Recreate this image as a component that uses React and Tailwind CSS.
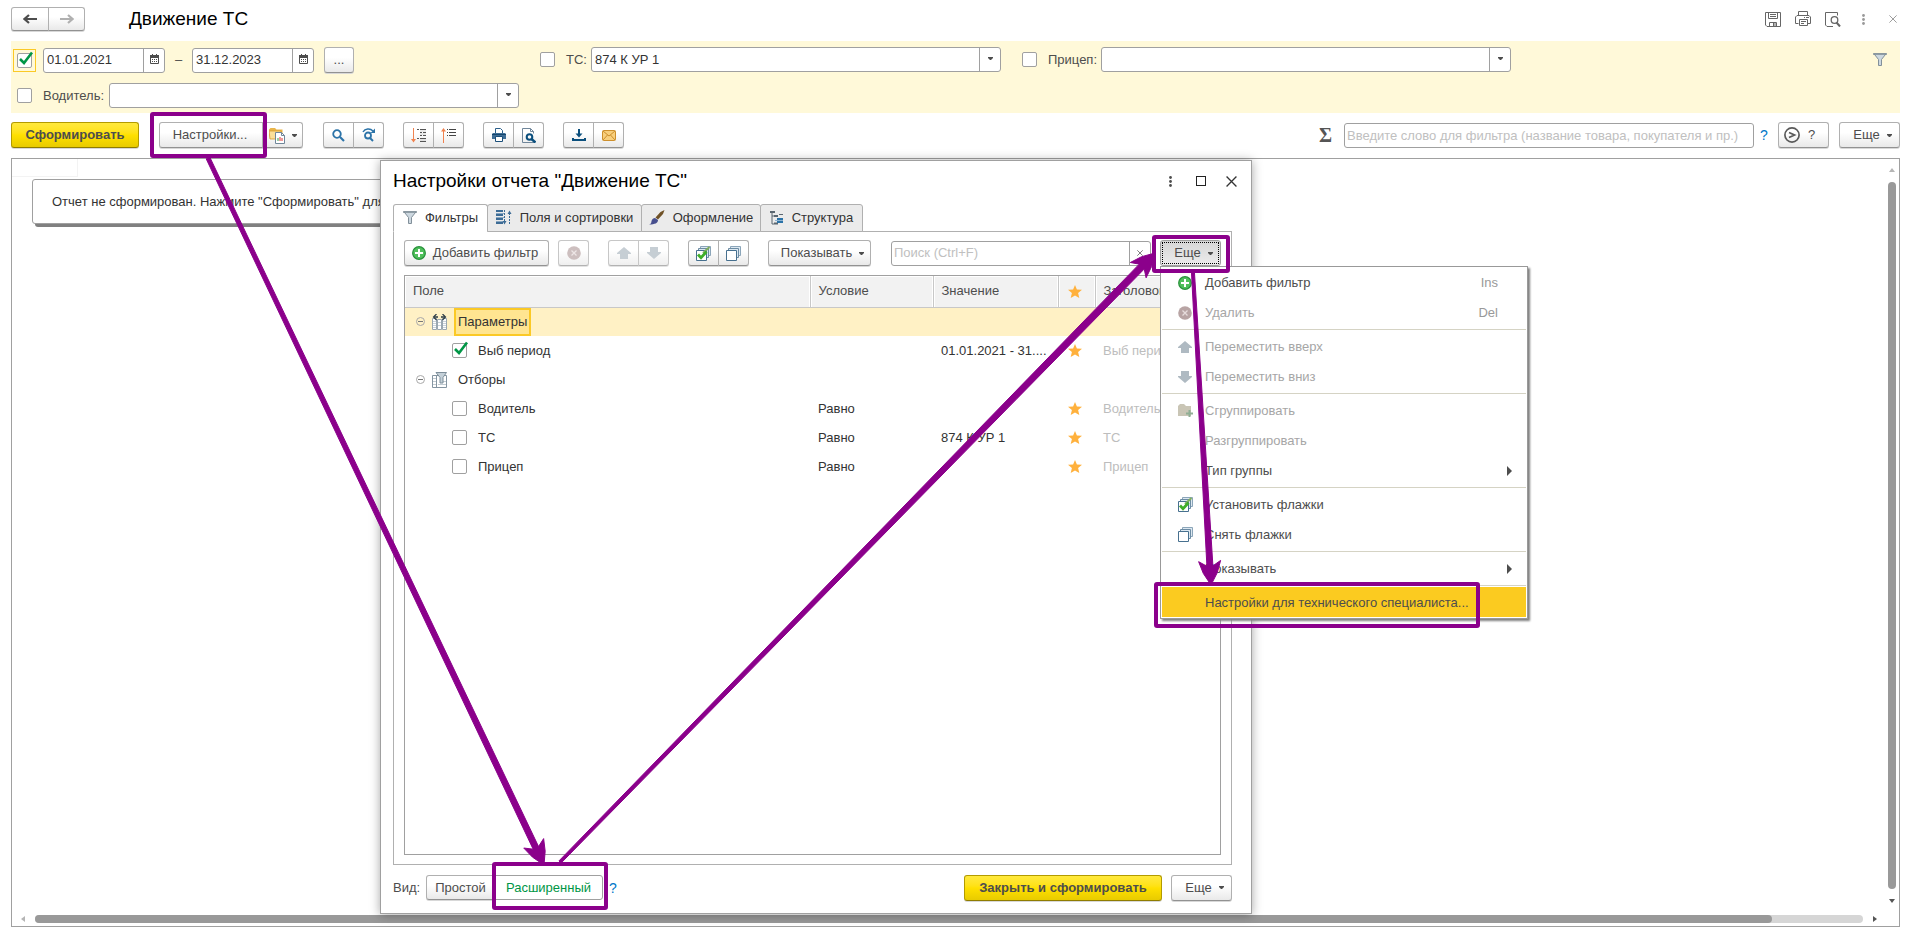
import { useState } from 'react';

const font = "font-['Liberation_Sans',Arial,sans-serif]";
const btn =
  'flex items-center justify-center border border-[#b0b0b0] border-b-[#929292] bg-linear-to-b from-white from-40% to-[#e9e9e9] text-[#4d4d4d] shadow-[0_1px_0_#d8d8d8]';
const primary =
  'flex items-center justify-center rounded-[3px] border border-[#b39b00] border-b-[#8f7c00] bg-linear-to-b from-[#ffe93c] via-[#ffe000] to-[#e8cb00] font-bold text-[#4d4d4d] shadow-[0_1px_0_#d8d8d8]';

/* ---------- icons ---------- */

function Svg({ w = 16, h = 16, children, className = '' }) {
  return (
    <svg
      width={w}
      height={h}
      viewBox={`0 0 ${w} ${h}`}
      fill="none"
      className={`shrink-0 ${className}`}
      aria-hidden="true"
    >
      {children}
    </svg>
  );
}

const Caret = () => (
  <Svg w={5} h={3}>
    <path d="M0 0h5v1L3 3H2L0 1z" fill="#4d4d4d" />
  </Svg>
);

const NavArrow = ({ color, flip }) => (
  <Svg w={14} h={10}>
    <path
      d={flip ? 'M0 5h11M8 1l4.500 4L8 9' : 'M14 5H3M6 1L1.500 5L6 9'}
      stroke={color}
      strokeWidth="2.200"
    />
  </Svg>
);

const CalendarIcon = () => (
  <Svg w={9} h={10}>
    <path d="M.5 2.500h8v7h-8z" stroke="#4d4d4d" />
    <path d="M0 1h9v3H0zM2 0h1v2H2zM6 0h1v2H6z" fill="#4d4d4d" />
    <path d="M2 5.500h6M2 7.500h6" stroke="#4d4d4d" strokeDasharray="1 1" />
  </Svg>
);

const FunnelIcon = () => (
  <Svg w={14} h={13}>
    <path d="M1 .8h12L8.500 6.500v6h-3v-6z" fill="#cdd8e0" stroke="#82909a" />
    <path d="M0 1h14" stroke="#82909a" strokeWidth="1.500" />
  </Svg>
);

const FolderReportIcon = () => (
  <Svg w={16} h={17}>
    <path d="M0 2.500L1.500 1H6l1.500 1.500h6V12H1z" fill="#e9b54a" />
    <path d="M0 4h12v8H1z" fill="#fbdf9a" stroke="#d69b2d" strokeWidth=".8" />
    <path d="M6.500 5.500h6l3 3v8h-9z" fill="#fff" stroke="#70869a" />
    <path d="M12.500 5.500v3h3" stroke="#70869a" />
    <path d="M9 14v-3" stroke="#2f9e44" />
    <path d="M11 14v-4" stroke="#e03131" />
    <path d="M13 14v-3" stroke="#e03131" />
  </Svg>
);

const SearchIcon = () => (
  <Svg w={13} h={13}>
    <circle cx="5" cy="5" r="3.800" stroke="#2b73a8" strokeWidth="1.800" />
    <path d="M8 8l4 4" stroke="#2b73a8" strokeWidth="2.200" />
  </Svg>
);

const SearchNextIcon = () => (
  <Svg w={14} h={14}>
    <circle cx="6" cy="7.500" r="3" stroke="#2b73a8" strokeWidth="1.800" />
    <path d="M8 10l3 3" stroke="#2b73a8" strokeWidth="2" />
    <path d="M1 4C3 .5 8 0 11 3" stroke="#2b73a8" strokeWidth="1.500" />
    <path d="M13 .5v4.500H8.500z" fill="#2b73a8" />
  </Svg>
);

const ExpandIcon = () => (
  <Svg w={15} h={15}>
    <path d="M2.500 0v12" stroke="#f0824f" />
    <path d="M0 11h5l-2.500 3.500z" fill="#f0824f" />
    <path d="M6 1.500h2M9 1.500h6M9 4.500h2M12 4.500h3M9 7.500h2M12 7.500h3M6 10.500h2M9 10.500h6M9 13.500h6" stroke="#555" />
    <path d="M9 3h6M9 6h6M9 12h6" stroke="#bbb" strokeWidth=".6" />
  </Svg>
);

const CollapseIcon = () => (
  <Svg w={15} h={15}>
    <path d="M2.500 2v13" stroke="#f0824f" />
    <path d="M0 3.500h5L2.500 0z" fill="#f0824f" />
    <path d="M6 1.500h1M8 1.500h7M6 4.500h1M8 4.500h7M6 7.500h1M8 7.500h7" stroke="#444" />
  </Svg>
);

const PrintIcon = () => (
  <Svg w={14} h={14}>
    <path d="M3.500 5V.5h5l2 2V5" stroke="#2b5f8a" fill="#fff" />
    <path d="M1 5h12l1 1v5h-3V9H3v2H0V6z" fill="#3f6f97" />
    <path d="M3.500 8.500h7v5h-7z" fill="#fff" stroke="#1c4f7a" />
    <path d="M0 6.500h14" stroke="#16476f" />
  </Svg>
);

const PreviewIcon = () => (
  <Svg w={14} h={15}>
    <path d="M12.500 14.500H.5V.5h8l3 3v2M8.500.5v3h3" stroke="#70869a" />
    <circle cx="7.500" cy="9" r="2.800" stroke="#0b4f7d" strokeWidth="2" />
    <path d="M9.500 11l4 3.500" stroke="#0b4f7d" strokeWidth="2.500" />
  </Svg>
);

const DownloadIcon = () => (
  <Svg w={14} h={12}>
    <path d="M7 0v6" stroke="#0b4f7d" strokeWidth="2" />
    <path d="M3.500 4.500h7L7 8.500z" fill="#0b4f7d" />
    <path d="M1 9v2h12V9" stroke="#0b4f7d" strokeWidth="2" />
  </Svg>
);

const MailIcon = () => (
  <Svg w={14} h={11}>
    <rect x=".5" y=".5" width="13" height="10" rx="1" fill="#f8cf7d" stroke="#cd8f2c" />
    <path d="M1 1l6 5 6-5M1 10l4.500-5M13 10L8.500 5" stroke="#cd8f2c" />
  </Svg>
);

const SaveIcon = () => (
  <Svg w={16} h={15}>
    <path d="M.5.5h15v14H2L.5 13z" stroke="#666" />
    <path d="M3.500.5v6h9v-6M5 2.500h6M5 4.500h6" stroke="#666" />
    <path d="M4.500 14v-3.500h7V14M8.500 11v3M10 11v3" stroke="#666" />
  </Svg>
);

const PrinterOutlineIcon = () => (
  <Svg w={16} h={16}>
    <path d="M3.500 4V.5h9V4M3.500 12.500h-3V6L2 4.500h12L15.500 6v6.500h-3" stroke="#666" />
    <path d="M4.500 8.500h8v6h-8zM6 10.500h5M6 12.500h3M9 6.500h1M11 6.500h3" stroke="#666" />
  </Svg>
);

const PageSearchIcon = () => (
  <Svg w={16} h={15}>
    <path d="M8 14.500H2L.5 13V.5h12v3" stroke="#666" />
    <circle cx="9.500" cy="8" r="3.300" stroke="#666" strokeWidth="1.300" />
    <path d="M11.500 10.500l3.500 4" stroke="#666" strokeWidth="2" />
  </Svg>
);

const DotsIcon = ({ color }) => (
  <Svg w={3} h={11}>
    <circle cx="1.500" cy="1.500" r="1.400" fill={color} />
    <circle cx="1.500" cy="5.500" r="1.400" fill={color} />
    <circle cx="1.500" cy="9.500" r="1.400" fill={color} />
  </Svg>
);

const CrossIcon = ({ size, color }) => (
  <svg width={size} height={size} viewBox="0 0 10 10" aria-hidden="true">
    <path d="M.5.5l9 9M9.500.5l-9 9" stroke={color} strokeWidth="1.200" />
  </svg>
);

const FieldsIcon = () => (
  <Svg w={16} h={15}>
    <path d="M0 1h7M0 5h7M0 9h7M0 13h7" stroke="#3d6c96" strokeWidth="2" />
    <path d="M0 3.500h9M0 7.500h9M0 11.500h9" stroke="#8aa8c2" />
    <path d="M8.500 0v12M13.500 3v12" stroke="#3d6c96" strokeDasharray="2 1" />
    <path d="M6.500 11h4l-2 3.500zM11.500 4h4l-2-3.500z" fill="#3d6c96" />
  </Svg>
);

const BrushIcon = () => (
  <Svg w={16} h={15}>
    <path d="M15.500 0L14 4 9 9.500 6.500 7.500 11.500 2z" fill="#6f5126" />
    <path d="M6 8l3 2c0 3-3 4.500-9 4.500 2-.5 2.500-2 2.500-3.500C3 9 4.500 8 6 8z" fill="#474f8e" />
  </Svg>
);

const StructureIcon = () => (
  <Svg w={14} h={14}>
    <path d="M0 1h5M4 5h4M4 12.500h4" stroke="#5a6670" strokeWidth="2" />
    <path d="M2 2v11h2M2 5h2" stroke="#5a6670" />
    <path d="M9 3.500h4" stroke="#5a6670" />
    <path d="M7 8h6M7 11h6" stroke="#2b73a8" strokeWidth="2" />
    <path d="M5 9.500h8" stroke="#8fb4d2" />
  </Svg>
);

const PlusIcon = () => (
  <Svg w={14} h={14}>
    <circle cx="7" cy="7" r="6.300" fill="#4fbf5b" stroke="#27913a" strokeWidth="1.200" />
    <path d="M7 3v8M3 7h8" stroke="#fff" strokeWidth="2" />
  </Svg>
);

const DeleteIcon = () => (
  <Svg w={14} h={14}>
    <circle cx="7" cy="7" r="6.800" fill="#b8a4a4" />
    <path d="M4.500 4.500l5 5M9.500 4.500l-5 5" stroke="#e6dcdc" strokeWidth="1.300" />
  </Svg>
);

const UpIcon = () => (
  <Svg w={14} h={12}>
    <path d="M7 0l7 6v1h-3v5H3V7H0V6z" fill="#afbac2" />
  </Svg>
);

const DownIcon = () => (
  <Svg w={14} h={12}>
    <path d="M7 12l7-6V5h-3V0H3v5H0v1z" fill="#afbac2" />
  </Svg>
);

const FlagsIcon = ({ checked }) => (
  <Svg w={15} h={15}>
    <path d="M4.500.5h10v9h-10z" fill="#dce8f1" stroke="#8ba5b9" />
    <path d="M2.500 2.500h10v9h-10z" fill="#dce8f1" stroke="#6c8ba3" />
    <path d="M.5 4.500h10v10H.5z" fill="#fff" stroke="#47708f" />
    {checked && (
      <>
        <path d="M7 7l6.500-6" stroke="#7fae5f" strokeWidth="2" />
        <path d="M2 8.500l3 3.200 5.500-6" stroke="#3fae29" strokeWidth="2.800" />
      </>
    )}
  </Svg>
);

const GroupIcon = () => (
  <Svg w={15} h={14}>
    <path d="M0 2l2-2h4l2 2h5v10H0z" fill="#c9c5b5" />
    <path d="M11.500 6v7M8 9.500h7" stroke="#8fae94" strokeWidth="2" />
  </Svg>
);

const StarIcon = () => (
  <Svg w={14} h={13} className="mx-auto">
    <path d="M7 0l1.900 4.400 5.100.4-3.900 3.300 1.200 4.900L7 10.400 2.700 13l1.200-4.900L0 4.800l5.100-.4z" fill="#ffb13d" />
  </Svg>
);

const CollapseNodeIcon = () => (
  <Svg w={9} h={9}>
    <circle cx="4.500" cy="4.500" r="4" stroke="#a8a8a8" />
    <path d="M2 4.500h5" stroke="#777" />
  </Svg>
);

const ParamsIcon = () => (
  <Svg w={15} h={16}>
    <path d="M.5 4.500h4v11h-4zM5.500 5.500h4v10h-4zM10.500 4.500h4v11h-4z" fill="#fff" stroke="#9aa7b1" />
    <path d="M1 7.500h3M1 9.500h3M1 11.500h3M1 13.500h3M11 7.500h3M11 9.500h3M11 11.500h3M11 13.500h3M6 8.500h3M6 11.500h3" stroke="#c9d2d8" />
    <path d="M2 3h4M9 3h4" stroke="#2e3d47" strokeWidth="1.500" />
    <path d="M4.500 0L1.500 3l3 3M10.500 0l3 3-3 3" stroke="#2e3d47" strokeWidth="1.200" />
  </Svg>
);

const SelectionsIcon = () => (
  <Svg w={15} h={16}>
    <path d="M.5 3.500h14v12H.5zM4.500 4v11" fill="#fff" stroke="#8595a1" />
    <path d="M1 6.500h3M1 9.500h3M1 12.500h3M10 9.500h4M6 12.500h8" stroke="#c0cad1" />
    <path d="M4 .5h10.500L11 5.500v5.500H8V5.500z" fill="#c4d0d8" stroke="#7d8e9a" />
  </Svg>
);

const RunIcon = () => (
  <Svg w={16} h={16}>
    <circle cx="8" cy="8" r="7.100" stroke="#5a5a5a" strokeWidth="1.700" />
    <path d="M5 5.500L10.500 8 5 10.500" stroke="#5a5a5a" strokeWidth="1.800" />
  </Svg>
);

/* ---------- controls ---------- */

function Checkbox({ id, label, defaultChecked = false }) {
  const [on, setOn] = useState(defaultChecked);
  return (
    <span className="relative flex size-[15px] shrink-0">
      <input
        id={id}
        type="checkbox"
        aria-label={label}
        checked={on}
        onChange={() => setOn(!on)}
        className="size-[15px] appearance-none rounded-[2px] border border-[#a0a0a0] bg-white"
      />
      {on && (
        <svg
          width="16"
          height="16"
          viewBox="0 0 16 16"
          fill="none"
          className="pointer-events-none absolute -top-[2px] left-px"
          aria-hidden="true"
        >
          <path d="M2 8l4 4L14 1.500" stroke="#009646" strokeWidth="2.600" />
        </svg>
      )}
    </span>
  );
}

function DateField({ label, value }) {
  return (
    <div className="flex h-[25px] w-[122px] rounded-[3px] border border-[#a0a0a0] bg-white">
      <input aria-label={label} defaultValue={value} className="w-0 flex-1 px-[3px] text-[#333] outline-none" />
      <button
        type="button"
        aria-label="Календарь"
        className="flex w-[21px] items-center justify-center border-l border-[#a0a0a0] pb-[2px]"
      >
        <CalendarIcon />
      </button>
    </div>
  );
}

function SelectField({ id, value }) {
  return (
    <div className="relative h-[25px] w-[410px] rounded-[3px] border border-[#a0a0a0] bg-white">
      <select id={id} defaultValue={value} className="h-full w-full appearance-none px-[3px] text-[#333] outline-none">
        <option>{value}</option>
      </select>
      <span className="pointer-events-none absolute inset-y-0 right-0 flex w-[21px] items-center justify-center border-l border-[#a0a0a0] pb-[2px]">
        <Caret />
      </span>
    </div>
  );
}

function ButtonGroup({ items, muted = false, className = '' }) {
  return (
    <div className={`flex ${muted ? 'opacity-70' : ''} ${className}`}>
      {items.map(({ label, icon }) => (
        <button
          key={label}
          type="button"
          aria-label={label}
          className={`${btn} -ml-px h-[26px] w-[31px] first:ml-0 first:rounded-l-[3px] last:rounded-r-[3px]`}
        >
          {icon}
        </button>
      ))}
    </div>
  );
}

function MoreButton({ children = 'Еще', className = 'w-[61px]' }) {
  return (
    <button type="button" className={`${btn} h-[26px] gap-[7px] rounded-[3px] pl-[6px] ${className}`}>
      {children}
      <Caret />
    </button>
  );
}

/* ---------- report page ---------- */

function Header() {
  return (
    <header className="flex h-[34px] items-start justify-between">
      <div className="flex items-start">
        <button type="button" aria-label="Назад" className={`${btn} h-6 w-[38px] rounded-l-[3px]`}>
          <NavArrow color="#4d4d4d" />
        </button>
        <button type="button" aria-label="Вперед" className={`${btn} -ml-px h-6 w-[37px] rounded-r-[3px]`}>
          <NavArrow color="#b0b0b0" flip />
        </button>
        <h1 className="ml-11 text-[19px] leading-6 text-black">Движение ТС</h1>
      </div>
      <div className="flex h-6 items-center pr-[3px]">
        <button type="button" aria-label="Сохранить" className="mr-[14px]">
          <SaveIcon />
        </button>
        <button type="button" aria-label="Печать" className="mr-[14px]">
          <PrinterOutlineIcon />
        </button>
        <button type="button" aria-label="Просмотр" className="mr-[21px]">
          <PageSearchIcon />
        </button>
        <button type="button" aria-label="Меню" className="mr-6">
          <DotsIcon color="#999" />
        </button>
        <button type="button" aria-label="Закрыть">
          <CrossIcon size={8} color="#999" />
        </button>
      </div>
    </header>
  );
}

function Filters() {
  return (
    <section className="grid h-[72px] grid-cols-[529px_482px_1fr] content-start gap-y-[10px] bg-[#fff9d9] pt-[6px] text-[#4d4d4d]">
      <div className="flex h-[26px] items-center">
        <span className="ml-[2px] border border-[#fbc926] p-[3px]">
          <Checkbox label="Период" defaultChecked />
        </span>
        <span className="ml-[7px]">
          <DateField label="Начало периода" value="01.01.2021" />
        </span>
        <span className="w-[27px] text-center">–</span>
        <DateField label="Конец периода" value="31.12.2023" />
        <button type="button" className={`${btn} ml-[10px] h-[26px] w-[30px] rounded-[3px]`}>
          ...
        </button>
      </div>
      <div className="flex h-[25px] items-center">
        <Checkbox label="Отбор по ТС" />
        <label htmlFor="truck" className="w-9 pl-[11px]">
          ТС:
        </label>
        <SelectField id="truck" value="874 К УР 1" />
      </div>
      <div className="flex h-[25px] items-center">
        <Checkbox label="Отбор по прицепу" />
        <label htmlFor="trailer" className="w-16 pl-[11px]">
          Прицеп:
        </label>
        <SelectField id="trailer" value="" />
        <button type="button" aria-label="Отборы" className="mr-[13px] ml-auto">
          <FunnelIcon />
        </button>
      </div>
      <div className="flex h-[25px] items-center pl-[6px]">
        <Checkbox label="Отбор по водителю" />
        <label htmlFor="driver" className="w-[77px] pl-[11px]">
          Водитель:
        </label>
        <SelectField id="driver" value="" />
      </div>
    </section>
  );
}

function Toolbar() {
  return (
    <div className="mt-[9px] flex h-[26px] items-center">
      <button type="button" className={`${primary} h-[26px] w-32`}>
        Сформировать
      </button>
      <button type="button" className={`${btn} ml-5 h-[26px] w-[104px] rounded-l-[3px] pr-[2px]`}>
        Настройки...
      </button>
      <button
        type="button"
        aria-label="Варианты отчета"
        className={`${btn} -ml-px h-[26px] w-[41px] gap-[7px] rounded-r-[3px]`}
      >
        <FolderReportIcon />
        <Caret />
      </button>
      <ButtonGroup
        className="ml-5"
        items={[
          { label: 'Найти', icon: <SearchIcon /> },
          { label: 'Найти далее', icon: <SearchNextIcon /> },
        ]}
      />
      <ButtonGroup
        className="ml-[19px]"
        items={[
          { label: 'Развернуть группы', icon: <ExpandIcon /> },
          { label: 'Свернуть группы', icon: <CollapseIcon /> },
        ]}
      />
      <ButtonGroup
        className="ml-[19px]"
        items={[
          { label: 'Печать', icon: <PrintIcon /> },
          { label: 'Предварительный просмотр', icon: <PreviewIcon /> },
        ]}
      />
      <ButtonGroup
        className="ml-[19px]"
        items={[
          { label: 'Сохранить', icon: <DownloadIcon /> },
          { label: 'Отправить', icon: <MailIcon /> },
        ]}
      />
      <span className="mr-3 ml-auto font-['Liberation_Serif',serif] text-xl leading-6 font-bold text-[#555]">Σ</span>
      <input
        aria-label="Фильтр"
        placeholder="Введите слово для фильтра (название товара, покупателя и пр.)"
        className="h-[25px] w-[410px] rounded-[3px] border border-[#a0a0a0] px-[2px] outline-none placeholder:text-[#c0c0c0]"
      />
      <a href="#help" className="w-6 pl-[6px] text-sm text-[#0077c8]">
        ?
      </a>
      <button type="button" aria-label="Справка" className={`${btn} h-[26px] w-[51px] gap-2 rounded-[3px] pr-2`}>
        <RunIcon />?
      </button>
      <MoreButton className="ml-[10px] w-[61px]" />
    </div>
  );
}

function Report() {
  return (
    <section className="mt-[10px] flex min-h-0 flex-1 flex-col border border-[#a0a0a0]">
      <div className="flex min-h-0 flex-1">
        <div className="min-w-0 flex-1">
          <div className="h-[18px] w-[66px] border-r border-b border-[#f3f3f3]" />
          <div className="mt-[2px] ml-5 flex h-[45px] w-[500px] items-center rounded-[3px] border border-[#a0a0a0] pt-px pl-[19px] text-[#333] shadow-[3px_3px_0_#808080]">
            Отчет не сформирован. Нажмите "Сформировать" для получения отчета.
          </div>
        </div>
        <div className="mr-[3px] flex w-2 flex-col items-center pt-[9px]">
          <Svg w={6} h={4}>
            <path d="M0 4h6L3 0z" fill="#b5b5b5" />
          </Svg>
          <div className="mt-[10px] w-2 flex-1 rounded-full bg-[#999]" />
          <Svg w={6} h={4} className="mt-[10px] mb-3">
            <path d="M0 0h6L3 4z" fill="#555" />
          </Svg>
        </div>
      </div>
      <div className="mb-[3px] flex h-2 items-center pr-[22px] pl-[9px]">
        <Svg w={4} h={6}>
          <path d="M4 0v6L0 3z" fill="#b5b5b5" />
        </Svg>
        <div className="mx-[10px] h-2 flex-1 rounded-full bg-[#d6d6d6]">
          <div className="h-2 w-[95%] rounded-full bg-[#999]" />
        </div>
        <Svg w={4} h={6}>
          <path d="M0 0v6l4-3z" fill="#555" />
        </Svg>
      </div>
    </section>
  );
}

/* ---------- settings dialog ---------- */

const tabs = [
  { label: 'Фильтры', icon: <FunnelIcon />, width: 'w-[95px]' },
  { label: 'Поля и сортировки', icon: <FieldsIcon />, width: 'w-[155px]' },
  { label: 'Оформление', icon: <BrushIcon />, width: 'w-[120px]' },
  { label: 'Структура', icon: <StructureIcon />, width: 'w-[103px]' },
];

const menu = [
  [
    { label: 'Добавить фильтр', icon: <PlusIcon />, hint: 'Ins' },
    { label: 'Удалить', icon: <DeleteIcon />, hint: 'Del', muted: true },
  ],
  [
    { label: 'Переместить вверх', icon: <UpIcon />, muted: true },
    { label: 'Переместить вниз', icon: <DownIcon />, muted: true },
  ],
  [
    { label: 'Сгруппировать', icon: <GroupIcon />, muted: true },
    { label: 'Разгруппировать', muted: true },
    { label: 'Тип группы', sub: true },
  ],
  [
    { label: 'Установить флажки', icon: <FlagsIcon checked /> },
    { label: 'Снять флажки', icon: <FlagsIcon /> },
  ],
  [{ label: 'Показывать', sub: true }],
  [{ label: 'Настройки для технического специалиста...', active: true }],
];

function Menu() {
  return (
    <div
      role="menu"
      className="absolute top-[26px] left-0 z-10 w-[368px] border border-[#999] bg-white px-px pb-px shadow-[2px_2px_2px_#808080]"
    >
      {menu.map((group, g) => (
        <div key={g} className={g > 0 ? 'mt-[2px] border-t border-[#d5d3c4] pt-px' : ''}>
          {group.map((item) => (
            <button
              key={item.label}
              type="button"
              role="menuitem"
              className={`flex h-[30px] w-full items-center pt-px pr-[14px] pl-4 text-left ${
                item.active ? 'bg-[#fbcb20]' : ''
              } ${item.muted ? 'text-[#a6a6a6]' : 'text-[#4d4d4d]'}`}
            >
              <span className="w-[27px]">{item.icon}</span>
              <span className="flex-1">{item.label}</span>
              {item.hint && <span className="pr-[14px] text-[#999]">{item.hint}</span>}
              {item.sub && (
                <Svg w={5} h={10}>
                  <path d="M0 0v10l5-5z" fill="#4d4d4d" />
                </Svg>
              )}
            </button>
          ))}
        </div>
      ))}
    </div>
  );
}

const rows = [
  { field: 'Параметры', group: true, icon: <ParamsIcon />, selected: true },
  { field: 'Выб период', checked: true, value: '01.01.2021 - 31....', title: 'Выб период' },
  { field: 'Отборы', group: true, icon: <SelectionsIcon /> },
  { field: 'Водитель', condition: 'Равно', title: 'Водитель' },
  { field: 'ТС', condition: 'Равно', value: '874 К УР 1', title: 'ТС' },
  { field: 'Прицеп', condition: 'Равно', title: 'Прицеп' },
];

const th = 'border-r border-[#c8c8c8] pl-2 text-left font-normal shadow-[inset_-1px_0_0_#fff,inset_1px_1px_0_#fff]';

function FilterTable() {
  return (
    <div className="mt-[9px] flex-1 overflow-hidden border border-[#a0a0a0]">
      <table className="w-full table-fixed border-collapse text-[#333]">
        <colgroup>
          <col className="w-[405px]" />
          <col className="w-[123px]" />
          <col className="w-[125px]" />
          <col className="w-[37px]" />
          <col />
        </colgroup>
        <thead>
          <tr className="h-[31px] border-b border-[#c8c8c8] bg-[#f2f2f2] text-[#4d4d4d]">
            <th className={th}>Поле</th>
            <th className={th}>Условие</th>
            <th className={th}>Значение</th>
            <th className="border-r border-[#c8c8c8] p-0 pr-1 shadow-[inset_-1px_0_0_#fff,inset_1px_1px_0_#fff]">
              <StarIcon />
            </th>
            <th className={th}>Заголовок</th>
          </tr>
        </thead>
        <tbody>
          {rows.map((row) => (
            <tr key={row.field} className={`h-[29px] ${row.selected ? 'bg-[#fff1c5]' : ''}`}>
              <td className="p-0">
                {row.group ? (
                  <div className="flex items-center pl-[11px]">
                    <CollapseNodeIcon />
                    <span className="ml-[7px]">{row.icon}</span>
                    <span
                      className={`ml-[7px] border-2 px-[2px] py-1 leading-4 ${
                        row.selected ? 'border-[#fbc926] bg-[#ffe591]' : 'border-transparent'
                      }`}
                    >
                      {row.field}
                    </span>
                  </div>
                ) : (
                  <div className="flex items-center pl-[47px]">
                    <Checkbox label={row.field} defaultChecked={row.checked} />
                    <span className="ml-[11px]">{row.field}</span>
                  </div>
                )}
              </td>
              <td className="py-0 pr-0 pl-2">{row.condition}</td>
              <td className="py-0 pr-0 pl-2 whitespace-nowrap">{row.value}</td>
              <td className="p-0 pr-1">{!row.group && <StarIcon />}</td>
              <td className="py-0 pr-0 pl-2 text-[#bdbdbd]">{row.title}</td>
            </tr>
          ))}
        </tbody>
      </table>
    </div>
  );
}

function DialogToolbar() {
  return (
    <div className="flex h-[26px] items-center">
      <button type="button" className={`${btn} h-[26px] w-[145px] gap-[7px] rounded-[3px] pr-[3px]`}>
        <PlusIcon />
        Добавить фильтр
      </button>
      <ButtonGroup muted className="ml-[9px]" items={[{ label: 'Удалить', icon: <DeleteIcon /> }]} />
      <ButtonGroup
        muted
        className="ml-[19px]"
        items={[
          { label: 'Переместить вверх', icon: <UpIcon /> },
          { label: 'Переместить вниз', icon: <DownIcon /> },
        ]}
      />
      <ButtonGroup
        className="ml-[19px]"
        items={[
          { label: 'Установить флажки', icon: <FlagsIcon checked /> },
          { label: 'Снять флажки', icon: <FlagsIcon /> },
        ]}
      />
      <MoreButton className="ml-[19px] w-[103px]">Показывать</MoreButton>
      <div className="ml-5 flex h-[25px] w-[260px] rounded-[3px] border border-[#a0a0a0]">
        <input
          aria-label="Поиск"
          placeholder="Поиск (Ctrl+F)"
          className="w-0 flex-1 px-[2px] outline-none placeholder:text-[#c0c0c0]"
        />
        <button
          type="button"
          aria-label="Очистить"
          className="flex w-[21px] items-center justify-center border-l border-[#a0a0a0]"
        >
          <CrossIcon size={6} color="#4d4d4d" />
        </button>
      </div>
      <div className="relative ml-auto">
        <button
          type="button"
          className="flex h-[26px] w-[61px] items-center justify-center rounded-[3px] border border-[#a0a0a0] bg-linear-to-b from-[#d6d6d6] to-[#ececec] p-px text-[#4d4d4d]"
        >
          <span className="flex h-full w-full items-center justify-center gap-[7px] border border-dotted border-black pl-[6px]">
            Еще
            <Caret />
          </span>
        </button>
        <Menu />
      </div>
    </div>
  );
}

function SettingsDialog() {
  return (
    <div
      role="dialog"
      aria-label="Настройки отчета"
      className="absolute top-[160px] left-[380px] flex h-[754px] w-[872px] flex-col border border-[#a0a0a0] bg-white px-3 shadow-[0_1px_10px_rgba(0,0,0,0.35)]"
    >
      <div className="flex h-[43px] shrink-0 items-center justify-between pr-[2px] pb-[3px]">
        <h2 className="text-[19px] leading-6 text-black">Настройки отчета "Движение ТС"</h2>
        <div className="flex items-center">
          <button type="button" aria-label="Меню" className="mr-6">
            <DotsIcon color="#4d4d4d" />
          </button>
          <button type="button" aria-label="Развернуть" className="mr-5 size-[10px] border border-[#222]" />
          <button type="button" aria-label="Закрыть">
            <CrossIcon size={11} color="#333" />
          </button>
        </div>
      </div>

      <div role="tablist" className="relative z-[1] -mb-px flex h-7 shrink-0">
        {tabs.map((tab, i) => (
          <button
            key={tab.label}
            type="button"
            role="tab"
            aria-selected={i === 0}
            className={`-ml-px flex items-center justify-center gap-2 rounded-t-[3px] border border-[#b0b0b0] pb-px text-[#333] first:ml-0 ${
              tab.width
            } ${i === 0 ? 'border-b-white bg-white' : 'bg-[#ebebeb]'}`}
          >
            {tab.icon}
            {tab.label}
          </button>
        ))}
      </div>

      <div className="mr-[7px] flex min-h-0 flex-1 flex-col border border-[#b0b0b0] px-[10px] py-2 pb-[9px]">
        <DialogToolbar />
        <FilterTable />
      </div>

      <div className="mr-[7px] flex h-12 shrink-0 items-center pb-[3px]">
        <span className="w-[33px] text-[#4d4d4d]">Вид:</span>
        <button type="button" className={`${btn} h-[25px] w-[69px] rounded-l-[3px]`}>
          Простой
        </button>
        <button
          type="button"
          className="-ml-px h-[25px] w-[109px] rounded-r-[3px] border border-[#a0a0a0] bg-white text-[#009646]"
        >
          Расширенный
        </button>
        <a href="#help" className="ml-[6px] text-sm text-[#0077c8]">
          ?
        </a>
        <button type="button" className={`${primary} ml-auto h-[26px] w-[198px]`}>
          Закрыть и сформировать
        </button>
        <MoreButton className="ml-[9px] w-[61px]" />
      </div>
    </div>
  );
}

/* ---------- callouts drawn over the page ---------- */

const frames = [
  { x: 152, y: 114, w: 113, h: 42 },
  { x: 494, y: 864, w: 112, h: 44 },
  { x: 1154, y: 237, w: 74, h: 34 },
  { x: 1156, y: 584, w: 322, h: 42 },
];

const arrows = [
  { from: [208, 158], to: [544, 865], start: 4, end: 6 },
  { from: [560, 862], to: [1155, 253], start: 3, end: 7 },
  { from: [1193, 273], to: [1211, 585], start: 3, end: 6 },
];

// tapered shaft with a swept-back head
function arrowPoints({ from, to, start, end }) {
  const len = Math.hypot(to[0] - from[0], to[1] - from[1]);
  const ux = (to[0] - from[0]) / len;
  const uy = (to[1] - from[1]) / len;
  const at = (along, side) => `${from[0] + ux * along - uy * side},${from[1] + uy * along + ux * side}`;
  return [
    at(0, start / 2),
    at(len - 19, end / 2),
    at(len - 24, 11),
    at(len - 12, 7),
    at(len, 0),
    at(len - 12, -7),
    at(len - 24, -11),
    at(len - 19, -end / 2),
    at(0, -start / 2),
  ].join(' ');
}

function Callouts() {
  return (
    <svg
      className="pointer-events-none absolute inset-0 z-20 h-full w-full overflow-visible"
      fill="none"
      aria-hidden="true"
    >
      {frames.map((f) => (
        <rect key={f.x} x={f.x} y={f.y} width={f.w} height={f.h} rx="1" stroke="#8b008b" strokeWidth="4" />
      ))}
      {arrows.map((a) => (
        <polygon
          key={a.from[0]}
          points={arrowPoints(a)}
          fill="#8b008b"
          stroke="#8b008b"
          strokeWidth="1"
          strokeLinejoin="round"
        />
      ))}
    </svg>
  );
}

export default function App() {
  return (
    <div className={`relative flex h-screen flex-col overflow-hidden bg-white pt-[7px] pr-3 pb-[7px] pl-[11px] text-[13px] leading-4 ${font}`}>
      <Header />
      <Filters />
      <Toolbar />
      <Report />
      <SettingsDialog />
      <Callouts />
    </div>
  );
}
